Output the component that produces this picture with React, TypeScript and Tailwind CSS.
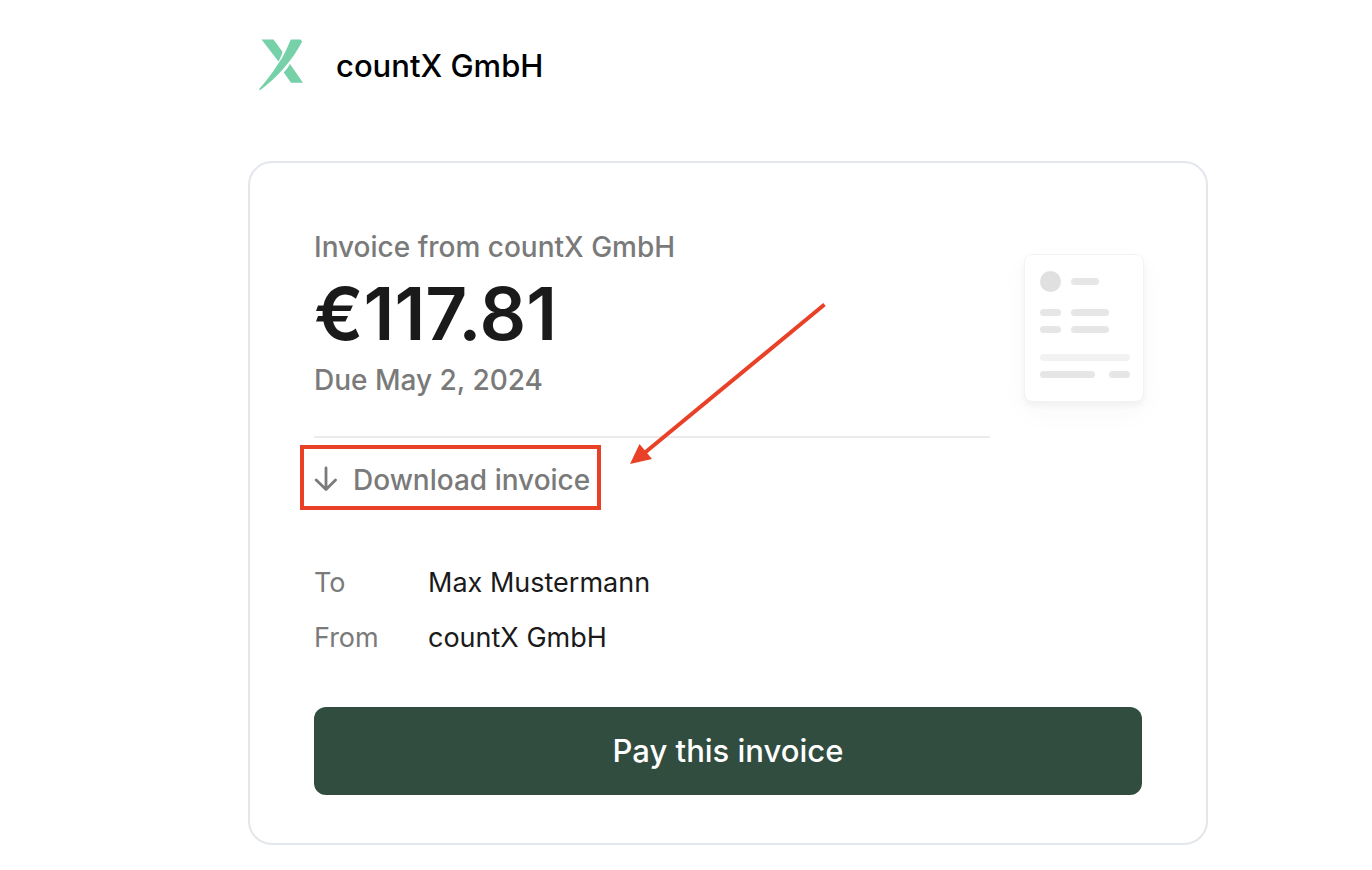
const PARTIES = [
  { label: 'To', value: 'Max Mustermann' },
  { label: 'From', value: 'countX GmbH' },
]

function Logo() {
  return (
    <svg className="mb-0.5" width="45" height="52" viewBox="0 0 45 52" fill="#76d0a8" aria-hidden="true">
      <path d="M2.500 0.500H14.500L23.500 12.800C23 15.500 21.500 18.800 19.500 22.500Z" />
      <path d="M31.800 0.500H41.500L43.200 2.500C38.500 11.500 32 21 25 29C17.500 37.500 9.500 45 1 51.200L0 50.300C6.500 43 13 34.500 19 25C24 18.500 28 9.500 31.800 0.500Z" />
      <path d="M31 25L44 43.700H32L24.800 33.500C27 31 29 28.500 31 25Z" />
    </svg>
  )
}

function InvoiceThumbnail() {
  return (
    <div className="h-37 rounded-lg border border-[#f3f3f3] bg-white shadow-[0_4px_6px_rgba(0,0,0,0.04),0_10px_30px_rgba(0,0,0,0.03)]">
      <svg viewBox="0 0 118 146" fill="#e6e6e6" aria-hidden="true">
        <circle cx="25.500" cy="26.500" r="10.500" fill="#e0e0e0" />
        <rect x="46" y="23" width="28" height="7" rx="3.500" />
        <rect x="15" y="54" width="21" height="7" rx="3.500" />
        <rect x="46" y="54" width="38" height="7" rx="3.500" />
        <rect x="15" y="71" width="21" height="7" rx="3.500" />
        <rect x="46" y="71" width="38" height="7" rx="3.500" />
        <rect x="15" y="99" width="90" height="7" rx="3.500" fill="#f2f2f2" />
        <rect x="15" y="116" width="55" height="7" rx="3.500" />
        <rect x="84" y="116" width="21" height="7" rx="3.500" />
      </svg>
    </div>
  )
}

function Highlight() {
  return (
    <>
      <span className="pointer-events-none absolute -top-[15px] -right-[11px] -bottom-[10px] -left-3.5 border-4 border-[#e94127]" />
      <svg className="pointer-events-none absolute -top-[160px] left-[314px]" width="200" height="168" viewBox="0 0 200 168" aria-hidden="true">
        <line x1="196.500" y1="4.500" x2="14" y2="155" stroke="#e94127" strokeWidth="4" />
        <polygon points="2,164 11.500,144 24,159" fill="#e94127" />
      </svg>
    </>
  )
}

export default function App() {
  return (
    <div className="min-h-screen bg-white pl-21 font-['Inter',sans-serif] text-[28px] leading-10 text-[#1a1a1a]">
      <main className="mx-auto max-w-240 pt-8 pb-6">
        <header className="mb-[61px] flex h-17 items-center gap-8 pl-[11px]">
          <Logo />
          <h1 className="text-[31px] font-medium text-black">countX GmbH</h1>
        </header>

        <section className="rounded-3xl border-2 border-[#e3e6eb] px-16 pt-16 pb-12">
          <div className="flex gap-[34px]">
            <div className="flex-1 border-b-2 border-[#ebebeb] pb-9 font-medium text-[#7a7a7a]">
              <p>Invoice from countX GmbH</p>
              <p className="text-[73px] leading-[93px] font-semibold text-[#1a1a1a]">€117.81</p>
              <p>Due May 2, 2024</p>
            </div>
            <div className="-mr-0.5 w-30 pt-[27px]">
              <InvoiceThumbnail />
            </div>
          </div>

          <div className="flex pt-[22px]">
            <a href="#download" className="relative flex items-center gap-4 font-medium text-[#7a7a7a]">
              <svg width="23" height="28" viewBox="0 0 23 28" fill="none" stroke="currentColor" strokeWidth="2.8" strokeLinecap="round" strokeLinejoin="round" aria-hidden="true">
                <path d="M12 2V23.500M2.200 14L12 23.500L21.500 14" />
              </svg>
              Download invoice
              <Highlight />
            </a>
          </div>

          <dl className="mt-[63px] grid grid-cols-[114px_1fr] gap-y-[15px] text-[27px]">
            {PARTIES.map(p => (
              <div key={p.label} className="contents">
                <dt className="text-[#7a7a7a]">{p.label}</dt>
                <dd>{p.value}</dd>
              </div>
            ))}
          </dl>

          <button type="button" className="mt-[49px] h-22 w-full rounded-xl bg-[#314d40] text-[31px] font-medium text-white">
            Pay this invoice
          </button>
        </section>
      </main>
    </div>
  )
}
